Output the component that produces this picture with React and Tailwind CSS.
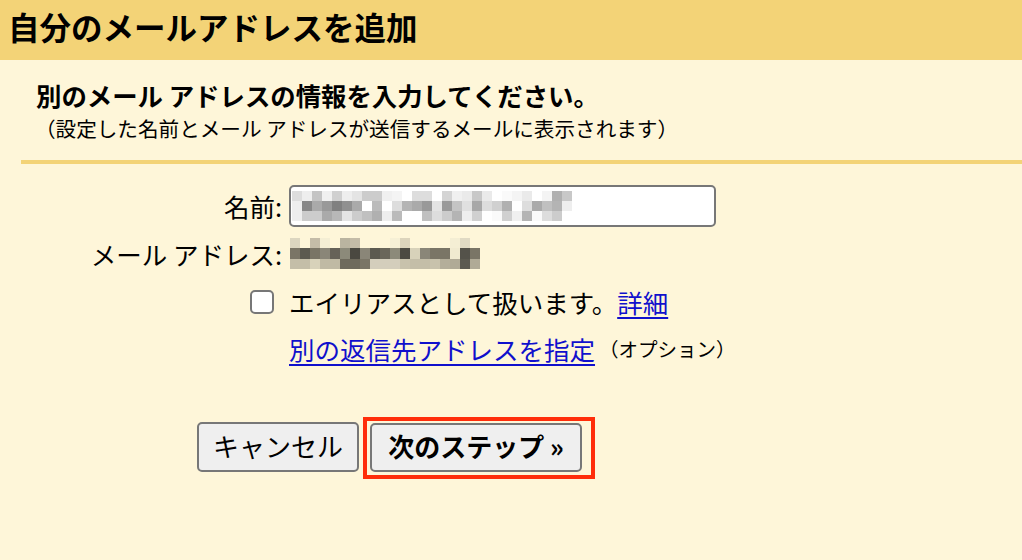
import React from "react";

const FONT = { fontFamily: '"Noto Sans CJK JP", "Noto Sans", sans-serif' };

const nameRows = [
  ["#ddd","#eee","#c4c4c4","#f0f0f0","#d0d0d0","#eee","#e4e4e4","#ccc","#ccc","#f0f0f0","#f4f4f4","#fff","#ddd","#ddd","#fff","#d4d4d4","#f0f0f0","#eaeaea","#c8c8c8","#eaeaea","#fff","#fafafa","#f4f4f4","#eaeaea","#fff","#f4f4f4","#b0b0b0","#c8c8c8"],
  ["#eee","#888","#aaa","#999","#808080","#909090","#aaa","#fff","#bbb","#fff","#ddd","#b4b4b4","#aaa","#999","#e4e4e4","#9a9a9a","#c4c4c4","#e0e0e0","#a8a8a8","#ddd","#d0d0d0","#b0b0b0","#fff","#ddd","#aaa","#c0c0c0","#b4b4b4","#eee"],
  ["#eee","#ccc","#ccc","#aaa","#b8b8b8","#e4e4e4","#ccc","#c0c0c0","#b0b0b0","#eee","#bbb","#fff","#fff","#c0c0c0","#ddd","#ccc","#b4b4b4","#eee","#d0d0d0","#fff","#fafafa","#d0d0d0","#f0f0f0","#b4b4b4","#fafafa","#ddd","#ccc","#fff"],
];

const B = null;
const mailRows = [
  ["#dcd6c0",B,"#c4bca8","#f4eed4",B,"#bab4a0","#c4bca8",B,B,B,"#f6f0d6","#dcd4bc",B,B,B,B,"#f4eed4","#e0dac4",B],
  ["#7a7566","#5c5a50","#7a7566","#8a8678","#666258","#8c8a7a","#4a4840","#8a8678","#5c5a50","#6a665a","#8c8a7a","#4c4a42","#d8d2ba","#8a8678","#7a7566","#7a7566","#f0ead0","#54524a","#7a7566"],
  ["#c4bea8","#c4bea8","#d8d2ba","#c0baa4","#c0baa4","#6e6a5c","#6e6a5c","#7a7566","#d4cebc","#d4cebc","#d4cebc","#c8c2ac","#c4bea8","#c4bea8","#c8c2ac","#b4ae9a","#b0aa96","#5c5a50","#b0aa96"],
];

function Pixels({ rows, heights }) {
  const w = rows[0].length * 10;
  const h = heights.reduce((a, b) => a + b, 0);
  let y = 0;
  return (
    <svg width={w} height={h} viewBox={`0 0 ${w} ${h}`} className="block">
      {rows.map((row, ri) => {
        const yy = y;
        y += heights[ri];
        return row.map((c, ci) =>
          c ? <rect key={ri + "-" + ci} x={ci * 10} y={yy} width={10} height={heights[ri]} fill={c} /> : null
        );
      })}
    </svg>
  );
}

export default function App() {
  return (
    <div className="w-[1022px] h-[560px] bg-[#fef6d9] text-black overflow-hidden" style={FONT}>
      <div className="h-[60px] bg-[#f3d377] flex items-center pl-[8px] pb-[7px]">
        <h1 className="text-[31.5px] font-bold leading-none">自分のメールアドレスを追加</h1>
      </div>

      <div className="pl-[36px] pt-[19px]">
        <div className="text-[25.4px] font-bold leading-[32px]">別のメール アドレスの情報を入力してください。</div>
        <div className="text-[20.6px] leading-[30px] mt-[2px] -ml-[1px]">（設定した名前とメール アドレスが送信するメールに表示されます）</div>
      </div>

      <div className="ml-[21px] mt-[17px] h-[4px] bg-[#f3d377]" />

      <div className="mt-[21px] flex flex-col">
        <div className="flex items-center h-[42px]">
          <div className="w-[282px] text-right text-[25.5px] leading-none">名前:</div>
          <div className="ml-[7px] w-[427px] h-[42px] shrink-0 bg-white border-2 border-[#777] rounded-[5px] flex items-center pl-[1px]">
            <Pixels rows={nameRows} heights={[10, 10, 10]} />
          </div>
        </div>

        <div className="flex items-center h-[31px] mt-[11px]">
          <div className="w-[282px] text-right text-[25.5px] leading-none">メール アドレス:</div>
          <div className="ml-[8px]">
            <Pixels rows={mailRows} heights={[10, 11, 10]} />
          </div>
        </div>

        <div className="flex items-center h-[30px] mt-[18px] pl-[250px]">
          <div className="w-[24px] h-[24px] bg-white border-2 border-[#777] rounded-[5px]" />
          <div className="ml-[15px] text-[25.5px] leading-none">
            エイリアスとして扱います。<a href="#" className="text-[#1010cc] underline underline-offset-[4px] decoration-[2px]">詳細</a>
          </div>
        </div>

        <div className="flex items-center h-[30px] mt-[17px] pl-[289px]">
          <a href="#" className="text-[25.5px] leading-none text-[#1010cc] underline underline-offset-[4px] decoration-[2px]">別の返信先アドレスを指定</a>
          <span className="text-[19.5px] leading-none ml-[4px]">（オプション）</span>
        </div>

        <div className="flex items-start mt-[58px] pl-[197px] gap-[11px]">
          <button className="w-[162px] h-[50px] bg-[#efefef] border-2 border-[#777] rounded-[5px] text-[26px] leading-none flex items-center justify-center pb-[3px]">
            キャンセル
          </button>
          <div className="relative mt-[1px]">
            <button className="w-[212px] h-[49px] bg-[#efefef] border-2 border-[#777] rounded-[5px] text-[26px] font-bold leading-none flex items-center justify-center pb-[3px]">
              次のステップ »
            </button>
            <div className="absolute -left-[7px] -top-[6px] -right-[13px] -bottom-[7px] border-4 border-[#ff2d0a] pointer-events-none" />
          </div>
        </div>
      </div>
    </div>
  );
}
